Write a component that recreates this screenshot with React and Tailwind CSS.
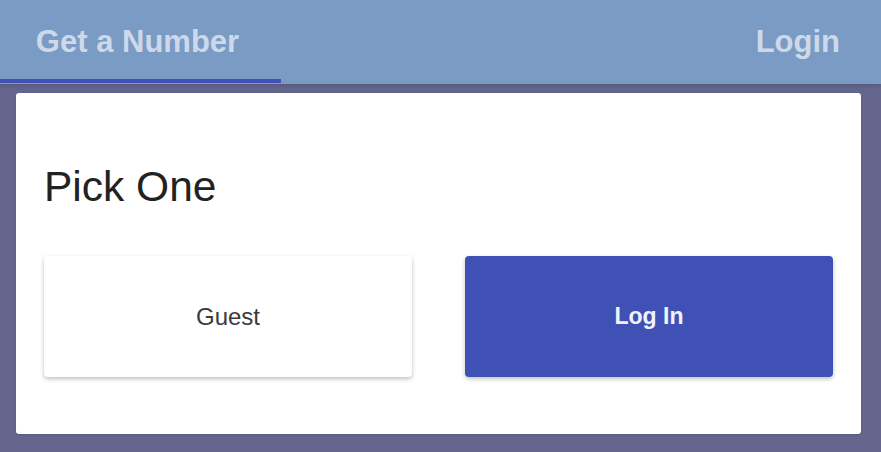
export default function App() {
  return (
    <div className="min-h-[452px] bg-[#65668e] font-['Liberation_Sans',Arial,sans-serif]">
      <header className="bg-[#7a9bc3] h-[84px] flex items-stretch justify-between shadow-[0_2px_4px_rgba(0,0,0,0.15)]">
        <div className="w-[281px] flex flex-col">
          <div className="flex-1 flex items-center justify-center pr-[6px] pt-[5px] text-[31px] font-bold text-[#cdd9ea]">
            Get a Number
          </div>
          <div className="h-[4px] mb-px bg-[#3f51b5]" />
        </div>
        <div className="flex items-center pr-[41px] pt-[5px] pb-[5px] text-[31px] font-bold text-[#cdd9ea]">
          Login
        </div>
      </header>

      <main className="pl-[16px] pr-[20px] pt-[9px] pb-[18px]">
        <div className="bg-white rounded-[3px] px-[28px] pt-[70px] pb-[57px] shadow-sm">
          <h1 className="text-[42.5px] leading-[48px] text-[#222] mb-[45px]">Pick One</h1>
          <div className="grid grid-cols-2 gap-[53px]">
            <button className="h-[121px] bg-white rounded-[4px] text-[24px] text-[#3a3a3a] shadow-[0_2px_4px_rgba(0,0,0,0.25)]">
              Guest
            </button>
            <button className="h-[121px] bg-[#3f51b5] rounded-[4px] text-[23px] font-bold text-[#f2f3fa] shadow-[0_2px_4px_rgba(0,0,0,0.25)]">
              Log In
            </button>
          </div>
        </div>
      </main>
    </div>
  );
}
